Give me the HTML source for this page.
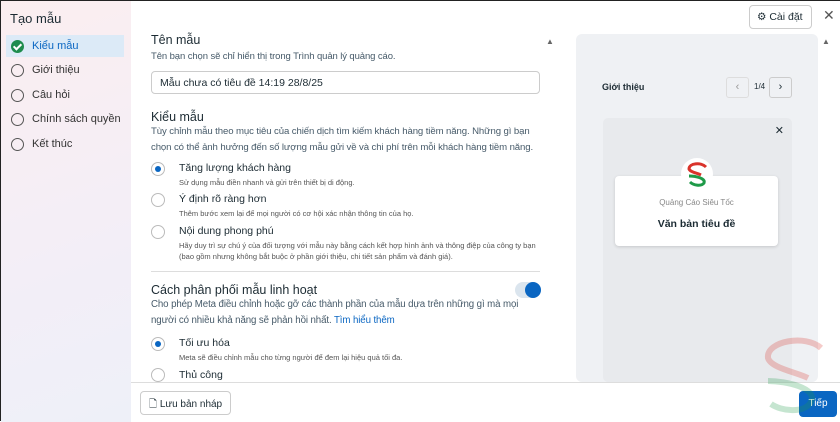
<!DOCTYPE html><html><head><meta charset="utf-8"><style>
*{box-sizing:border-box;margin:0;padding:0}
body{width:840px;height:421px;overflow:hidden;font-family:"Liberation Sans",sans-serif;color:#1c2b33;background:#fff;position:relative;border:1px solid #222}
.side{position:absolute;left:0;top:0;width:130px;height:421px;background:linear-gradient(160deg,#fbeef0,#f3eef7 60%,#eef0f8)}
.side h1{font-size:13px;font-weight:normal;position:absolute;left:9px;top:10px}
.step{position:absolute;left:5px;width:118px;height:22px;font-size:11px;display:flex;align-items:center;padding-left:5px;color:#333;white-space:nowrap;overflow:hidden}
.step i{flex:none;width:13px;height:13px;border:1.5px solid #555;border-radius:50%;margin-right:8px;display:inline-block}
.act{background:#dceaf7;color:#0a66c2}
.act i{background:#1e8c4e;border-color:#1e8c4e;position:relative}
.act i:after{content:"";position:absolute;left:3px;top:1px;width:3px;height:6px;border:solid #fff;border-width:0 2px 2px 0;transform:rotate(45deg)}
.main{position:absolute;left:130px;top:0;width:430px;height:381px}
.t{position:absolute;left:20px;font-size:12.5px;color:#1c2b33}
.s{position:absolute;left:20px;font-size:9.5px;color:#465a69;line-height:16px;white-space:nowrap;letter-spacing:-.1px}
.r{position:absolute;left:20px;width:14px;height:14px;border:1px solid #bbb;border-radius:50%}
.r.on:after{content:"";position:absolute;left:3px;top:3px;width:6px;height:6px;border-radius:50%;background:#0a66c2}
.rl{position:absolute;left:48px;font-size:10.5px}
.rs{position:absolute;left:48px;font-size:7.5px;color:#555;line-height:11px;white-space:nowrap}
.foot{position:absolute;left:130px;top:381px;width:709px;height:40px;border-top:1px solid #ddd;background:#fff}
</style></head><body>
<div class="side"><h1>Tạo mẫu</h1>
<div class="step act" style="top:34px"><i></i>Kiểu mẫu</div>
<div class="step" style="top:58px"><i></i>Giới thiệu</div>
<div class="step" style="top:83px"><i></i>Câu hỏi</div>
<div class="step" style="top:107px"><i></i>Chính sách quyền ...</div>
<div class="step" style="top:132px"><i></i>Kết thúc</div>
</div>
<div class="main">
<div class="t" style="top:32px">Tên mẫu</div>
<div class="s" style="top:48px">Tên bạn chọn sẽ chỉ hiển thị trong Trình quản lý quảng cáo.</div>
<div style="position:absolute;left:20px;top:70px;width:389px;height:23px;border:1px solid #ccc;border-radius:4px;font-size:10.5px;padding:5px 8px">Mẫu chưa có tiêu đề 14:19 28/8/25</div>
<div style="position:absolute;left:415px;top:36px;font-size:8px;color:#666">▲</div>
<div class="t" style="top:109px">Kiểu mẫu</div>
<div class="s" style="top:123px;font-size:9.6px">Tùy chỉnh mẫu theo mục tiêu của chiến dịch tìm kiếm khách hàng tiềm năng. Những gì bạn<br>chọn có thể ảnh hưởng đến số lượng mẫu gửi về và chi phí trên mỗi khách hàng tiềm năng.</div>
<div class="r on" style="top:161px"></div><div class="rl" style="top:161px">Tăng lượng khách hàng</div><div class="rs" style="top:176px">Sử dụng mẫu điền nhanh và gửi trên thiết bị di động.</div>
<div class="r" style="top:192px"></div><div class="rl" style="top:192px">Ý định rõ ràng hơn</div><div class="rs" style="top:207px">Thêm bước xem lại để mọi người có cơ hội xác nhận thông tin của họ.</div>
<div class="r" style="top:224px"></div><div class="rl" style="top:224px">Nội dung phong phú</div><div class="rs" style="top:239px">Hãy duy trì sự chú ý của đối tượng với mẫu này bằng cách kết hợp hình ảnh và thông điệp của công ty bạn<br>(bao gồm nhưng không bắt buộc ở phần giới thiệu, chi tiết sản phẩm và đánh giá).</div>
<div style="position:absolute;left:20px;top:270px;width:389px;border-top:1px solid #ddd"></div>
<div class="t" style="top:282px">Cách phân phối mẫu linh hoạt</div>
<div style="position:absolute;left:384px;top:281px;width:26px;height:16px;border-radius:8px;background:#dbe5ee"><div style="position:absolute;right:0;top:0;width:16px;height:16px;border-radius:50%;background:#0a66c2"></div></div>
<div class="s" style="top:296px;font-size:9.7px">Cho phép Meta điều chỉnh hoặc gỡ các thành phần của mẫu dựa trên những gì mà mọi<br>người có nhiều khả năng sẽ phản hồi nhất. <span style="color:#0a66c2">Tìm hiểu thêm</span></div>
<div class="r on" style="top:336px"></div><div class="rl" style="top:336px">Tối ưu hóa</div><div class="rs" style="top:351px">Meta sẽ điều chỉnh mẫu cho từng người để đem lại hiệu quả tối đa.</div>
<div class="r" style="top:367px"></div><div class="rl" style="top:368px">Thủ công</div>
</div>
<div style="position:absolute;left:560px;top:0;width:280px;height:381px;background:#fff">
<div style="position:absolute;left:188px;top:4px;width:63px;height:24px;border:1px solid #ccc;border-radius:4px;font-size:10.5px;padding:5px 7px;white-space:nowrap">⚙ Cài đặt</div>
<div style="position:absolute;left:262px;top:6px;font-size:14px;color:#555">✕</div>
<div style="position:absolute;left:261px;top:36px;font-size:8px;color:#666">▲</div>
<div style="position:absolute;left:15px;top:33px;width:242px;height:348px;background:#eff1f4;border-radius:6px">
<div style="position:absolute;left:26px;top:48px;font-size:9px;font-weight:bold">Giới thiệu</div>
<div style="position:absolute;left:150px;top:43px;width:23px;height:21px;border:1px solid #ddd;border-radius:3px;text-align:center;font-size:11px;color:#999;line-height:19px">‹</div>
<div style="position:absolute;left:178px;top:48px;font-size:8px">1/4</div>
<div style="position:absolute;left:193px;top:43px;width:23px;height:21px;border:1px solid #ccc;border-radius:3px;text-align:center;font-size:11px;line-height:19px">›</div>
<div style="position:absolute;left:27px;top:84px;width:189px;height:264px;background:#e8eaed;border-radius:5px">
<div style="position:absolute;right:8px;top:6px;font-size:11px">✕</div>
<div style="position:absolute;left:12px;top:58px;width:163px;height:70px;background:#fff;border-radius:4px;box-shadow:0 1px 3px rgba(0,0,0,.15)">
<div style="position:absolute;left:66px;top:-18px;width:32px;height:32px;border-radius:50%;background:#fff">
<svg width="32" height="32" viewBox="0 0 32 32"><path d="M25 9C20 4 8 5 8 11C9 14 16 15 20 17" stroke="#d9332b" stroke-width="3" fill="none"/><path d="M8 18C14 18 25 20 23 25C20 29 12 27 9 24" stroke="#1e9a48" stroke-width="3" fill="none"/></svg></div>
<div style="position:absolute;width:100%;top:22px;text-align:center;font-size:8px;color:#888">Quảng Cáo Siêu Tốc</div>
<div style="position:absolute;width:100%;top:42px;text-align:center;font-size:10.5px;font-weight:bold">Văn bản tiêu đề</div>
</div></div></div></div>
<div class="foot">
<div style="position:absolute;left:9px;top:8px;width:91px;height:24px;border:1px solid #ccc;border-radius:4px;font-size:10px;padding:5px 8px;white-space:nowrap">🗋 Lưu bản nháp</div>
<div style="position:absolute;left:668px;top:8px;width:38px;height:26px;background:#0a66c2;border-radius:4px;color:#fff;font-size:10px;text-align:center;line-height:26px">Tiếp</div>
</div>
<svg style="position:absolute;left:755px;top:335px;opacity:.25" width="70" height="80" viewBox="0 0 70 80"><path d="M65 12C50 -2 10 5 12 22C15 32 40 36 52 42" stroke="#d9332b" stroke-width="6" fill="none"/><path d="M12 45C30 45 62 52 55 66C48 78 25 75 15 68" stroke="#1e9a48" stroke-width="6" fill="none"/></svg>
</body></html>
